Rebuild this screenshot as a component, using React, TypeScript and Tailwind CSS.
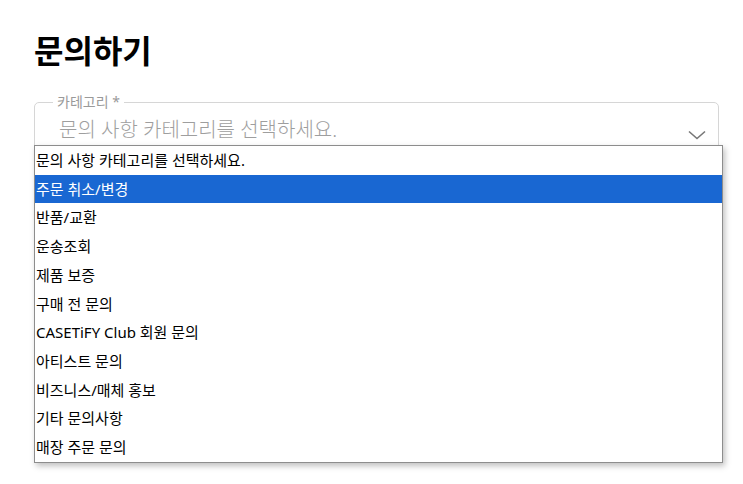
import React from "react";

const options = [
  "문의 사항 카테고리를 선택하세요.",
  "주문 취소/변경",
  "반품/교환",
  "운송조회",
  "제품 보증",
  "구매 전 문의",
  "CASETiFY Club 회원 문의",
  "아티스트 문의",
  "비즈니스/매체 홍보",
  "기타 문의사항",
  "매장 주문 문의",
];

const App = () => {
  const selected = 1;

  return (
    <main
      className="min-h-screen w-full bg-white px-[34px] pt-[31px]"
      style={{ fontFamily: '"Noto Sans", "Noto Sans CJK KR", sans-serif' }}
    >
      <h1 className="text-[32px] font-bold leading-[40px] text-black">문의하기</h1>

      <div className="relative mt-[31px] h-[56px] w-[685px] rounded-[5px] border border-[#d6d6d6]">
        <span className="absolute left-[18px] top-[-11px] bg-white px-[4px] text-[14px] leading-[20px] text-[#9a9a9a]">
          카테고리 *
        </span>
        <div className="flex items-start justify-between pl-[24px] pr-[12px] pt-[14px]">
          <span className="text-[20px] font-light leading-[26px] text-[#9e9e9e]">문의 사항 카테고리를 선택하세요.</span>
          <svg width="18" height="10" viewBox="0 0 18 10" fill="none" className="mt-[13px]">
            <path d="M1 1.5l8 7 8-7" stroke="#777" strokeWidth="1.6" />
          </svg>
        </div>

        <ul className="absolute left-[-1px] top-[42px] z-10 w-[689px] border border-[#8d8d8d] bg-white shadow-[2px_3px_6px_rgba(0,0,0,0.25)]">
          {options.map((opt, i) => (
            <li
              key={opt}
              className={
                i === selected
                  ? "flex h-[28.7px] items-center bg-[#1967d2] pl-[1px] text-[15px] text-white"
                  : "flex h-[28.7px] items-center pl-[1px] text-[15px] text-black"
              }
            >
              {opt}
            </li>
          ))}
        </ul>
      </div>
    </main>
  );
};

export default App;
